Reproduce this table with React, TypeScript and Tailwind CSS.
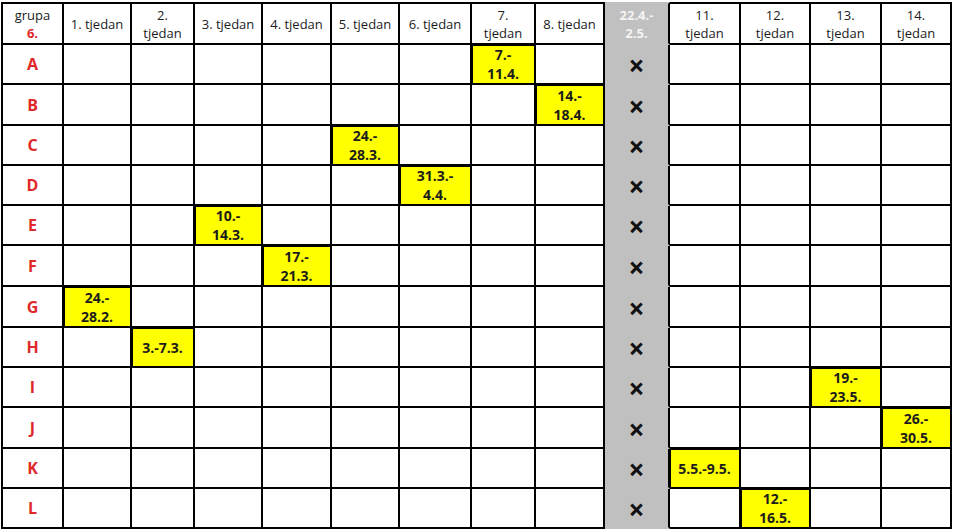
const weeks = [
  ["1. tjedan"],
  ["2.", "tjedan"],
  ["3. tjedan"],
  ["4. tjedan"],
  ["5. tjedan"],
  ["6. tjedan"],
  ["7.", "tjedan"],
  ["8. tjedan"],
  null, // holiday column
  ["11.", "tjedan"],
  ["12.", "tjedan"],
  ["13.", "tjedan"],
  ["14.", "tjedan"],
];

// group letter, column index (0-based over weeks), date lines
const groups: [string, number, string[]][] = [
  ["A", 6, ["7.-", "11.4."]],
  ["B", 7, ["14.-", "18.4."]],
  ["C", 4, ["24.-", "28.3."]],
  ["D", 5, ["31.3.-", "4.4."]],
  ["E", 2, ["10.-", "14.3."]],
  ["F", 3, ["17.-", "21.3."]],
  ["G", 0, ["24.-", "28.2."]],
  ["H", 1, ["3.-7.3."]],
  ["I", 11, ["19.-", "23.5."]],
  ["J", 12, ["26.-", "30.5."]],
  ["K", 9, ["5.5.-9.5."]],
  ["L", 10, ["12.-", "16.5."]],
];

function Lines({ lines, tall }: { lines: string[]; tall?: boolean }) {
  return (
    <div className={tall ? "flex flex-col items-center leading-[19px]" : "flex flex-col items-center leading-[18px]"}>
      {lines.map((l, i) => (
        <span key={i}>{l}</span>
      ))}
    </div>
  );
}

export default function App() {
  return (
    <div className="w-[955px] h-[531px] bg-white pt-[2px] pl-[1px] text-[#1c1c1c] font-['Open_Sans',sans-serif] overflow-hidden">
      <div className="grid grid-cols-[63px_68px_63px_68px_69px_68px_72px_64px_69px_65px_71px_70px_71px_70px] grid-rows-[43px_40px_41px_40px_40px_40px_41px_41px_40px_40px_41px_40px_40px] w-fit">
        {/* header row */}
        <div className="border-2 border-black flex items-center justify-center text-[13px]">
          <div className="flex flex-col items-center leading-[18px]">
            <span>grupa</span>
            <span className="font-bold text-[#e02828]">6.</span>
          </div>
        </div>
        {weeks.map((w, i) =>
          w ? (
            <div key={i} className="border-t-2 border-r-2 border-b-2 border-black flex items-center justify-center text-[13px]">
              <Lines lines={w} />
            </div>
          ) : (
            <div key={i} className="border-t-2 border-r-2 border-b-2 border-t-[#c0c0c0] border-b-[#c0c0c0] border-r-black bg-[#c0c0c0] flex items-center justify-center text-[13px] font-bold text-[#f4f4f4]">
              <Lines lines={["22.4.-", "2.5."]} />
            </div>
          )
        )}

        {/* group rows */}
        {groups.map(([letter, col, dates]) => (
          <div key={letter} className="contents">
            <div className="border-l-2 border-r-2 border-b-2 border-black flex items-center justify-center text-[16px] font-bold text-[#e02828]">
              {letter}
            </div>
            {weeks.map((w, i) => {
              if (!w) {
                return (
                  <div key={i} className="border-r-2 border-b-2 border-r-black border-b-[#c0c0c0] bg-[#c0c0c0] flex items-center justify-center pt-[2px] text-[28px] font-bold leading-none text-[#111]">
                    ×
                  </div>
                );
              }
              if (i === col) {
                return (
                  <div key={i} className="border-r-2 border-b-2 border-black bg-[#ffff00] shadow-[inset_1px_1px_0_#000] flex items-center justify-center text-[14px] font-bold">
                    <Lines lines={dates} tall />
                  </div>
                );
              }
              return <div key={i} className="border-r-2 border-b-2 border-black" />;
            })}
          </div>
        ))}
      </div>
    </div>
  );
}
